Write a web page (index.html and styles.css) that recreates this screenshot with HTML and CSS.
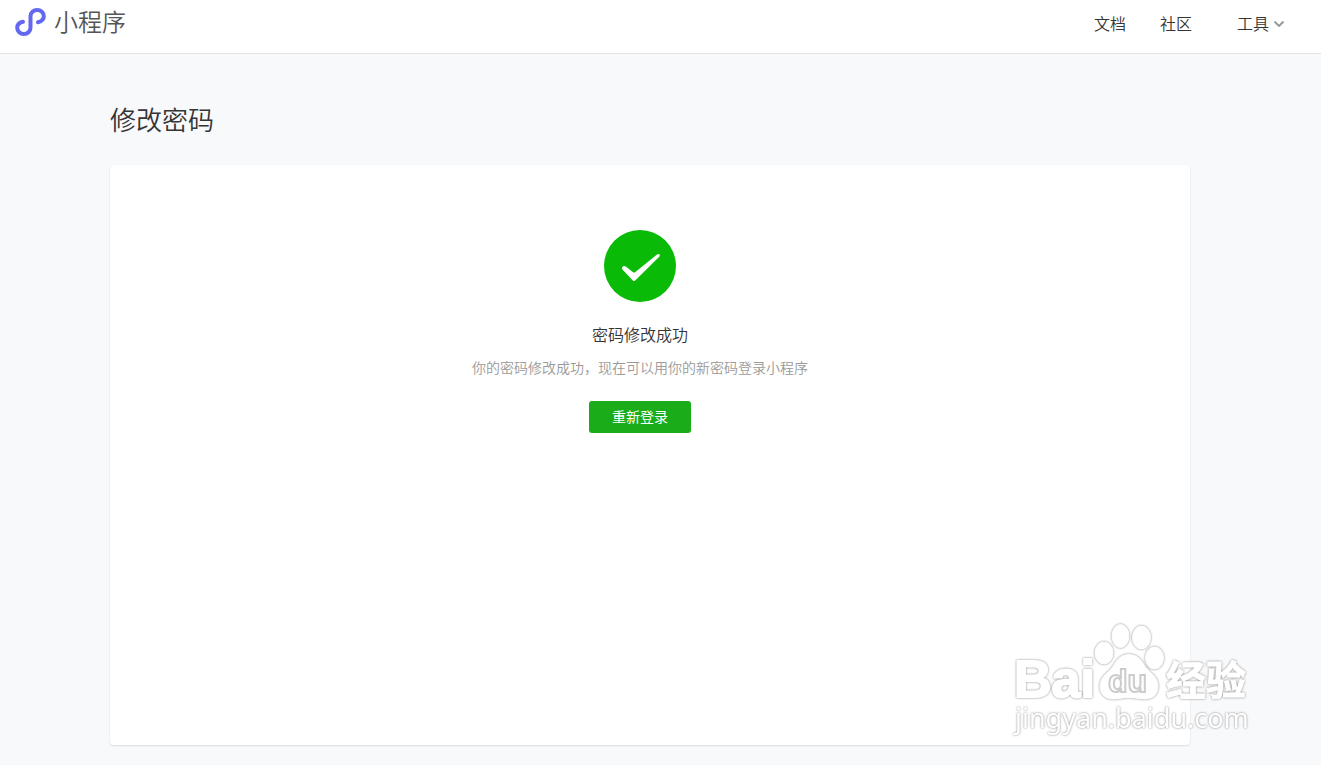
FILE: index.html
```html
<!DOCTYPE html>
<html lang="zh-CN">
<head>
    <meta charset="UTF-8">
    <meta name="viewport" content="width=device-width, initial-scale=1.0">
    <title>小程序 - 修改密码</title>
    <link rel="stylesheet" href="styles.css">
</head>
<body>

    <header class="header">
        <a href="#" class="logo">
            <svg class="logo-icon" viewBox="0 0 32 30" aria-hidden="true">
                <path d="M23 15.2C27 14.2 28.8 12.2 28.8 9.2A6.6 6.2 0 0 0 15.500 9.2V20.8A6.6 6.2 0 0 1 2.2 20.8C2.2 17.8 4.200 15.6 8 14.8"></path>
            </svg>
            <span class="logo-text">小程序</span>
        </a>
        <nav class="nav">
            <a href="#" class="nav-link">文档</a>
            <a href="#" class="nav-link">社区</a>
            <button type="button" class="nav-menu">
                工具
                <svg class="nav-arrow" viewBox="0 0 10 6" aria-hidden="true"><path d="M0.500 0.500l4.500 4.500 4.500-4.500"></path></svg>
            </button>
        </nav>
    </header>

    <main class="container">
        <h1 class="page-title">修改密码</h1>
        <section class="card">
            <svg class="success-icon" viewBox="0 0 72 72" aria-hidden="true">
                <circle cx="36" cy="36" r="36"></circle>
                <path d="M18.2 37.4Q19.6 35.1 21.8 36.6L29.4 42.4Q30.2 42.9 31.100 42.2L53 24.4Q55 23.2 55.8 24.8Q56 26 55 27L31.2 50.4Q30 51.6 28.8 50.4L18.4 39.6Q17.600 38.7 18.2 37.4Z"></path>
            </svg>
            <h2 class="card-title">密码修改成功</h2>
            <p class="card-desc">你的密码修改成功，现在可以用你的新密码登录小程序</p>
            <button type="button" class="btn-primary">重新登录</button>
        </section>
    </main>

    <svg class="watermark" viewBox="0 0 250 120" aria-label="Baidu经验">
        <g class="watermark-brand">
            <text x="9" y="82" class="wm-latin">Bai</text>
            <ellipse cx="99" cy="38" rx="9" ry="11"></ellipse>
            <ellipse cx="115.500" cy="21" rx="8.500" ry="11.500"></ellipse>
            <ellipse cx="136.500" cy="22.500" rx="9" ry="11.500"></ellipse>
            <ellipse cx="149.500" cy="43" rx="9" ry="11"></ellipse>
            <path d="M124 39.500C131 39.500 136 44 139 50C143 57 153 61 153 71C153 79 148 84 140 84C134 84 130 82.500 124 82.500C118 82.500 114 84 108 84C100 84 95 79 95 71C95 61 105 57 109 50C112 44 117 39.500 124 39.500Z"></path>
            <text x="161" y="80" class="wm-cjk">经验</text>
        </g>
        <text x="103" y="77" class="wm-du">du</text>
        <text x="10" y="113" class="wm-url">jingyan.baidu.com</text>
    </svg>

</body>
</html>
```

FILE: styles.css
```css
:root {
    --primary-color: #1aad19;
    --success-color: #09bb07;
    --logo-color: #6467f0;
    --text-color: #353535;
    --muted-color: #9a9a9a;
    --body-bg: #f8f9fb;
    --card-bg: #ffffff;
}

* {
    margin: 0;
    padding: 0;
    box-sizing: border-box;
}

body {
    font-family: "Noto Sans CJK SC", sans-serif;
    font-weight: 350;
    font-size: 14px;
    line-height: 20px;
    background-color: var(--body-bg);
    color: var(--text-color);
}

a {
    color: inherit;
    text-decoration: none;
}

button {
    font: inherit;
    border: none;
    cursor: pointer;
}

.header {
    display: flex;
    justify-content: space-between;
    align-items: flex-start;
    height: 54px;
    padding: 7px 37px 0 15px;
    background-color: var(--card-bg);
    border-bottom: 1px solid #e0e3e6;
}

.logo {
    display: flex;
    align-items: flex-start;
    gap: 7px;
}

.logo-icon {
    width: 32px;
    height: 30px;
    fill: none;
    stroke: var(--logo-color);
    stroke-width: 4;
    stroke-linecap: round;
}

.logo-text {
    font-size: 24px;
    line-height: 28px;
    color: #555555;
}

.nav {
    display: flex;
    align-items: center;
    gap: 34px;
    font-size: 16px;
    line-height: 32px;
}

.nav-menu {
    display: flex;
    align-items: center;
    gap: 5px;
    margin-left: 11px;
    background: none;
    color: inherit;
}

.nav-arrow {
    width: 10px;
    height: 6px;
    margin-top: 2px;
    fill: none;
    stroke: #9a9a9a;
    stroke-width: 2;
}

.container {
    max-width: 1101px;
    margin: 0 auto;
    padding: 45px 21px 20px 0;
}

/* 标题与卡片 */
.page-title {
    font-size: 26px;
    font-weight: 350;
    line-height: 40px;
    margin-bottom: 26px;
}

.card {
    display: flex;
    flex-direction: column;
    align-items: center;
    min-height: 580px;
    padding: 65px 20px 65px 0;
    background-color: var(--card-bg);
    border-radius: 4px;
    box-shadow: 0 1px 2px rgba(0, 0, 0, 0.12);
}

.success-icon {
    width: 72px;
    height: 72px;
    margin-bottom: 20px;
}

.success-icon circle {
    fill: var(--success-color);
}

.success-icon path {
    fill: #ffffff;
}

.card-title {
    font-size: 16px;
    font-weight: 350;
    line-height: 24px;
    margin-bottom: 11px;
}

.card-desc {
    color: var(--muted-color);
    margin-bottom: 24px;
}

.btn-primary {
    min-width: 102px;
    padding: 0 22px 2px;
    line-height: 30px;
    font-weight: 400;
    color: #ffffff;
    background-color: var(--primary-color);
    border-radius: 3px;
}

/* 右下角水印 */
.watermark {
    position: fixed;
    right: 66px;
    bottom: 30px;
    width: 250px;
    height: 120px;
    overflow: visible;
    pointer-events: none;
    fill: #ffffff;
    stroke: #ffffff;
    stroke-width: 1;
}

.watermark-brand {
    filter: drop-shadow(0 0 1px #888888);
}

.wm-latin {
    font: bold 52px "Liberation Sans", sans-serif;
    stroke-width: 2;
    stroke-linejoin: round;
}

.wm-du {
    font: bold 32px "Liberation Sans", sans-serif;
    stroke: #cccccc;
    stroke-width: 2;
}

.wm-cjk {
    font: bold 40px "Noto Sans CJK SC", sans-serif;
}

.wm-url {
    font: 27px "Noto Sans", sans-serif;
    stroke: none;
    filter: drop-shadow(0 0 1px #888888);
}
```
